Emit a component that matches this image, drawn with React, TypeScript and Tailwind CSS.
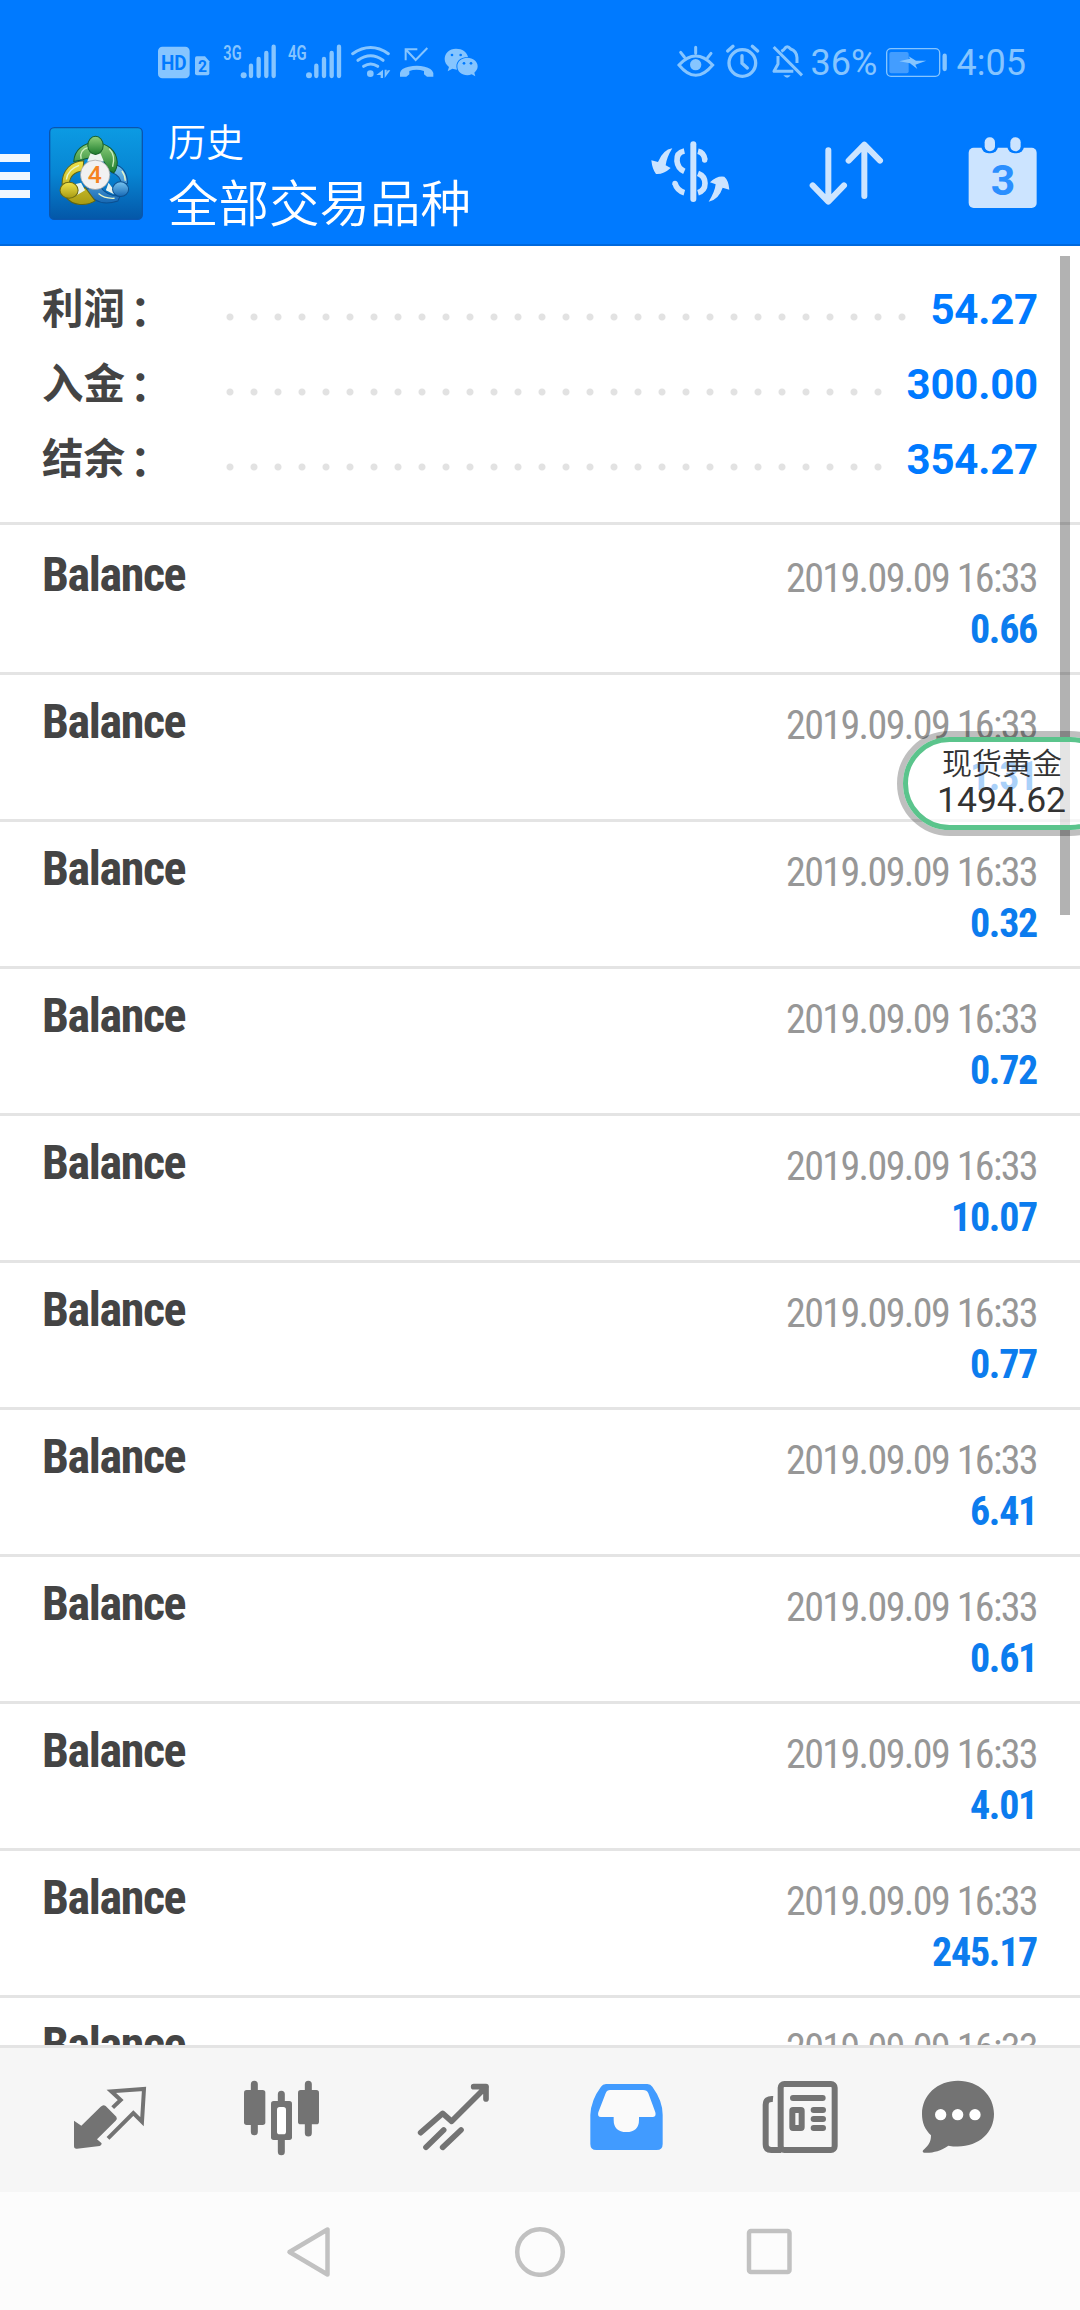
import React from 'react';

const summary = [
  { label: '利润', value: '54.27' },
  { label: '入金', value: '300.00' },
  { label: '结余', value: '354.27' },
];

const amounts = ['0.66', '1.31', '0.32', '0.72', '10.07', '0.77', '6.41', '0.61', '4.01', '245.17', ''];

function StatusBar() {
  return (
    <div className="flex h-24 items-start justify-between pt-10 pl-[156.67px] pr-[54px] text-[#86c5ff]">
      <div className="flex">
        <svg viewBox="50 30 106 120" className="h-10 w-[35.33px]" fill="currentColor">
          <rect x="53" y="50" width="95" height="95" rx="13" />
          <text x="62" y="119" fontSize="58" fontWeight="700" textLength="77" lengthAdjust="spacingAndGlyphs" fill="#007aff" className="font-['Roboto',sans-serif]">HD</text>
        </svg>
        <svg viewBox="156 30 84 120" className="h-10 w-7" fill="currentColor">
          <path d="M170 79h25l13 15v36q0 6-6 6h-31q-6 0-6-6V85q0-6 5-6z" />
          <text x="174" y="127" fontSize="47" fontWeight="700" fill="#007aff" className="font-['Roboto',sans-serif]">2</text>
        </svg>
        <svg viewBox="240 30 185 120" className="h-10 w-[61.67px]" fill="currentColor">
          <text x="250" y="90" fontSize="59" fontWeight="600" textLength="55" lengthAdjust="spacingAndGlyphs" className="font-['Roboto',sans-serif]">3G</text>
          <circle cx="311" cy="136" r="9" />
          <path d="M333 107v31M356 87v51M379 69v69M401 50v88" stroke="currentColor" strokeWidth="13" strokeLinecap="round" />
        </svg>
        <svg viewBox="425 30 195 120" className="h-10 w-[65px]" fill="currentColor">
          <text x="443" y="90" fontSize="59" fontWeight="600" textLength="56" lengthAdjust="spacingAndGlyphs" className="font-['Roboto',sans-serif]">4G</text>
          <circle cx="506" cy="136" r="9" />
          <path d="M528 107v31M551 87v51M574 69v69M596 50v88" stroke="currentColor" strokeWidth="13" strokeLinecap="round" />
        </svg>
        <svg viewBox="620 30 145 120" className="h-10 w-[48.33px]" fill="none" stroke="currentColor" strokeWidth="9" strokeLinecap="round">
          <path d="M637 71q54-37 107 0M653 91q38-27 75 0M670 109q21-14 42 0" />
          <circle cx="690" cy="131" r="10" fill="currentColor" stroke="none" />
          <path d="M728 119v25h-7v-9h-13zM733 119v25l17-23h-8l-3 7v-9z" fill="currentColor" stroke="none" />
        </svg>
        <svg viewBox="765 30 130 120" className="h-10 w-[43.33px]" fill="none" stroke="currentColor" strokeWidth="6">
          <path d="M797 91V58h35M799 60l28 30 35-36" />
          <path d="M780 140v-11q3-15 26-19 25-5 48 0 21 4 26 19v11h-19l-9-7v-10q-23-7-44 0v10l-9 7z" fill="currentColor" stroke="none" />
        </svg>
        <svg viewBox="895 30 125 120" className="h-10 w-[41.67px]" fill="currentColor">
          <path d="M949 56c-20 0-34 14-34 31 0 10 5 18 13 24l-4 13 14-8 14 3c-7-22 8-38 33-38-3-15-17-25-36-25z" />
          <path d="M983 83c17 0 31 11 31 26 0 8-4 14-10 19l3 11-11-6q-6 3-13 3c-17 0-30-11-30-27 0-15 13-26 30-26z" />
          <g fill="#007aff">
            <circle cx="937" cy="75" r="4" />
            <circle cx="963" cy="75" r="4" />
            <circle cx="973" cy="100" r="4" />
            <circle cx="994" cy="100" r="4" />
          </g>
        </svg>
      </div>
      <div className="flex font-['Roboto',sans-serif]">
        <svg viewBox="45 30 135 120" className="h-10 w-[45px]" fill="none" stroke="currentColor" strokeWidth="9" strokeLinecap="round">
          <path d="M57 105q50-54 101 0-51 62-101 0zM107 52v18M62 67l11 14M153 70l-10 13" />
          <circle cx="107" cy="104" r="17" fill="currentColor" stroke="none" />
        </svg>
        <svg viewBox="180 30 138 120" className="h-10 w-[46px]" fill="none" stroke="currentColor" strokeWidth="10" strokeLinecap="round">
          <circle cx="247" cy="99" r="40" />
          <path d="M246 77v23l16 14M203 63l16-14M293 63l-16-14" />
        </svg>
        <svg viewBox="318 30 122 120" className="h-10 w-[40.67px]" fill="none" stroke="currentColor" strokeWidth="9" strokeLinejoin="round">
          <path d="M341 51l85 85M354 78v24l-12 22h58M364 64q8-4 9-7 8-14 19 0 18 6 19 26v16" />
          <path d="M370 136h22q-10 14-22 0z" fill="currentColor" stroke="none" />
        </svg>
        <span className="w-[76px] pl-1 text-[36px] leading-[47px]">36%</span>
        <svg viewBox="668 30 207 120" className="h-10 w-[69px]" fill="none">
          <rect x="679" y="56" width="159" height="83" rx="13" stroke="currentColor" strokeWidth="4" />
          <rect x="687" y="66" width="58" height="64" rx="6" fill="#439dff" />
          <path d="M717 94l32-8-4-7 22 13h31l-33 12 6 13-22-17z" fill="currentColor" />
          <path d="M853 77v40" stroke="currentColor" strokeWidth="13" strokeLinecap="round" />
        </svg>
        <span className="ml-[5px] text-[36px] leading-[47px]">4:05</span>
      </div>
    </div>
  );
}

function AppLogo() {
  return (
    <svg viewBox="148 53 281 278" className="h-[93px] w-[94px]">
      <defs>
        <linearGradient id="tile" x1="0" y1="0" x2="0" y2="1">
          <stop offset="0" stopColor="#0c9be3" />
          <stop offset="0.5" stopColor="#0785d3" />
          <stop offset="1" stopColor="#0457a8" />
        </linearGradient>
        <linearGradient id="green" x1="0" y1="0" x2="0" y2="1">
          <stop offset="0" stopColor="#8ed07c" />
          <stop offset="1" stopColor="#1d7c2c" />
        </linearGradient>
        <linearGradient id="yellow" x1="0" y1="0" x2="0" y2="1">
          <stop offset="0" stopColor="#f1e34a" />
          <stop offset="1" stopColor="#a79a12" />
        </linearGradient>
        <linearGradient id="blue" x1="0" y1="0" x2="0" y2="1">
          <stop offset="0" stopColor="#77c4f0" />
          <stop offset="1" stopColor="#1668b4" />
        </linearGradient>
      </defs>
      <rect x="150" y="55" width="277" height="274" rx="14" fill="url(#tile)" stroke="#0a55ad" strokeWidth="4" />
      <path d="M345 165q36 10 38 56l-18 8q-2-32-30-40zM256 240q34 56 98 34l6-14q-40 0-60-30z" fill="url(#blue)" stroke="#0b4f91" strokeWidth="3" />
      <path d="M252 154c-38 0-66 30-65 70l22-2q2-32 40-38zM198 262c20 28 62 28 88 12l-30-40-30 20z" fill="url(#yellow)" stroke="#5d6416" strokeWidth="3" />
      <path d="M222 156c2-34 28-56 64-56s64 24 66 58q0 18-10 32l-22-10q0-30-32-36-26 0-42 8z" fill="url(#green)" stroke="#155c2a" strokeWidth="3" />
      <path d="M244 148q-6-26 22-34M328 118q20 20 10 54" fill="none" stroke="#cdeebd" strokeWidth="4" />
      <path d="M200 210q4-30 38-42M296 252q18 16 48 14M366 184q10 14 10 30" fill="none" stroke="#e8f6c8" strokeWidth="4" />
      <path d="M272 132h30l10 24h-50zM218 226l26-6 12 22-24 14zM340 238l-14-18-8 22 24 12z" fill="#e9f4ef" />
      <ellipse cx="287" cy="108" rx="23" ry="27" fill="url(#green)" stroke="#17602a" strokeWidth="3" />
      <ellipse cx="208" cy="242" rx="27" ry="24" fill="url(#yellow)" stroke="#6b6a14" strokeWidth="3" />
      <ellipse cx="362" cy="239" rx="24" ry="22" fill="url(#blue)" stroke="#0d508f" strokeWidth="3" />
      <circle cx="286" cy="196" r="44" fill="#f1f1f1" stroke="#9a9a9a" strokeWidth="2" />
      <text x="285" y="221" textAnchor="middle" fontSize="74" fontWeight="500" fill="#f58220" className="font-['Roboto',sans-serif]">4</text>
    </svg>
  );
}

function Header() {
  return (
    <div className="flex h-[150px] items-start border-b-2 border-[#0069dd] text-white">
      <div className="mt-[58px] flex w-[30px] flex-col gap-2.5">
        <div className="h-2 bg-[#f0f7ff]" />
        <div className="h-2 bg-[#f0f7ff]" />
        <div className="h-2 bg-[#f0f7ff]" />
      </div>
      <div className="mt-[31px] ml-[19px]">
        <AppLogo />
      </div>
      <div className="mt-[17px] ml-[25px] w-[479px] font-['Noto_Sans_CJK_SC',sans-serif] font-[350]">
        <div className="text-[38px] leading-[53px]">历史</div>
        <div className="text-[50.5px] leading-[68px]">全部交易品种</div>
      </div>
      <svg viewBox="80 40 260 250" className="mt-[27px] h-[83.33px] w-[86.67px]" fill="none" stroke="#cce4ff" strokeWidth="17">
        <path d="M219 104v164" strokeWidth="18" strokeLinecap="round" />
        <path d="M192 124q-24 5-22 30 2 22 22 31M192 249q-22-6-28-28" />
        <path d="M233 125q18 4 21 26M233 191q21 8 21 30 0 22-21 28" />
        <circle cx="253" cy="151" r="8" fill="#cce4ff" stroke="none" />
        <circle cx="164" cy="221" r="8" fill="#cce4ff" stroke="none" />
        <path d="M156 116q-28 4-43 41l-20-5q3 28 14 41 22 2 44-18l-15-8q3-24 20-51zM265 276q30-6 42-42l20 6q-2-28-15-39-22-4-43 17l17 6q-2 22-21 52z" fill="#cce4ff" stroke="none" />
      </svg>
      <svg viewBox="560 40 240 250" className="mt-[27px] ml-[73.33px] h-[83.33px] w-20" fill="none" stroke="#cce4ff" strokeWidth="18" strokeLinecap="round" strokeLinejoin="round">
        <path d="M624 122v153M577 227l47 49 47-49M732 259V105M685 153l47-48 47 48" />
      </svg>
      <svg viewBox="1030 40 230 270" className="mt-[27px] ml-[76.67px] h-[90px] w-[76.67px]">
        <rect x="1044" y="114" width="204" height="181" rx="15" fill="#cce4ff" />
        <rect x="1082" y="74" width="50" height="57" rx="22" fill="#007aff" />
        <rect x="1160" y="74" width="50" height="57" rx="22" fill="#007aff" />
        <rect x="1092" y="83" width="31" height="42" rx="15" fill="#cce4ff" />
        <rect x="1169" y="83" width="31" height="42" rx="15" fill="#cce4ff" />
        <text x="1147" y="256" textAnchor="middle" fontSize="128" fontWeight="700" fill="#2b8fff" className="font-['Roboto',sans-serif]">3</text>
      </svg>
    </div>
  );
}

function Summary() {
  return (
    <div className="h-[279px] border-b-[3px] border-[#e4e4e4] px-[42px] pt-[26px]">
      {summary.map((item) => (
        <div key={item.label} className="flex h-[75px] items-center">
          <span className="-mt-1 flex w-[176px] gap-[5px] font-['Noto_Sans_CJK_SC',sans-serif] text-[41.5px] leading-[75px] font-bold text-[#444]">
            {item.label}
            <span className="pt-0.5">：</span>
          </span>
          <div className="mt-[15px] mr-[17px] h-6 flex-1 bg-[radial-gradient(circle,#e2e2e2_3px,transparent_4px)] bg-size-[24px_24px]" />
          <span className="font-['Roboto',sans-serif] text-[42px] leading-[75px] font-bold tracking-[-0.2px] text-[#007aff]">{item.value}</span>
        </div>
      ))}
    </div>
  );
}

function BalanceRow({ amount }: { amount: string }) {
  return (
    <div className="flex h-[147px] shrink-0 justify-between border-t-[3px] border-[#e4e4e4] pt-[25px] pr-[43px] pl-[42px] font-['Roboto_Condensed','Roboto',sans-serif] font-stretch-condensed first:border-transparent">
      <div className="text-[48px] leading-[44px] font-bold tracking-[-1.4px] text-[#444]">Balance</div>
      <div className="text-right text-[40px]">
        <div className="leading-[51px] tracking-[-1.6px] text-[#979797]">2019.09.09 16:33</div>
        <div className="leading-[52px] font-bold tracking-[-1.3px] text-[#0c7cee]">{amount}</div>
      </div>
    </div>
  );
}

function PriceBubble() {
  return (
    <div className="absolute top-[731px] left-[897px] h-[105px] w-[226px] rounded-full border-[6px] border-black/25">
      <div className="h-full rounded-full border-[5px] border-[#5bc48c] bg-white/65 pt-1 text-[#333]">
        <div className="pl-[34px] font-['Noto_Sans_CJK_SC',sans-serif] text-[30px] leading-[30px] font-[350]">现货黄金</div>
        <div className="pl-[29px] font-['Roboto',sans-serif] text-[35.5px] leading-[48px]">1494.62</div>
      </div>
    </div>
  );
}

function TabBar() {
  return (
    <div className="grid h-[147px] grid-cols-6 border-t-[3px] border-[#e4e4e4] bg-[#f6f6f6] text-[#737373]">
      <svg viewBox="0 144 540 432" className="h-36 w-[180px]" fill="currentColor">
        <path d="M222 362l22 15 58-57q8-8 15-2l32 32q4 6-2 12l-56 56 14 12q0 7-6 8l-68 8q-9 1-9-8z" />
        <path d="M338 323l24-23-28-26 98-7-6 98-26-26-76 76" fill="none" stroke="currentColor" strokeWidth="12" />
      </svg>
      <svg viewBox="540 144 540 432" className="h-36 w-[180px]" fill="currentColor">
        <path d="M763 253v142M925 253v146M844 283v30M844 410v45" stroke="currentColor" strokeWidth="21" strokeLinecap="round" />
        <rect x="732" y="270" width="64" height="105" rx="8" />
        <rect x="894" y="270" width="63" height="103" rx="8" />
        <rect x="813" y="303" width="63" height="117" rx="8" />
        <rect x="831" y="321" width="27" height="82" rx="8" fill="#fff" />
      </svg>
      <svg viewBox="0 54 540 432" className="h-36 w-[180px]" fill="none" stroke="currentColor" strokeWidth="17" strokeLinecap="round">
        <path d="M182 308l66-58 27 24L378 171M341 170h37v37" strokeLinejoin="round" />
        <path d="M198 352l53-52M248 352l55-52" />
      </svg>
      <svg viewBox="540 54 540 432" className="h-36 w-[180px]">
        <path d="M738 162h124q10 0 15 8 31 42 31 84v88q0 18-18 18H709q-18 0-18-18v-88q2-44 32-84 5-8 15-8z" fill="#419bff" />
        <path d="M750 180h99q12 0 16 10l21 57q4 14-9 14h-40v8q0 37-38 37t-38-37v-8h-38q-12 0-8-14l22-57q4-10 13-10z" fill="#fafafa" />
      </svg>
      <svg viewBox="0 144 540 432" className="h-36 w-[180px]" fill="none" stroke="currentColor" strokeWidth="18">
        <rect x="182" y="252" width="162" height="198" rx="11" />
        <path d="M159 297q-22-2-22 18v118q0 17 17 17h30" />
        <path d="M219 294h89M281 330h28M281 357h28M281 384h28" strokeLinecap="round" />
        <rect x="217" y="330" width="28" height="54" rx="2" />
      </svg>
      <svg viewBox="540 144 540 432" className="h-36 w-[180px]" fill="currentColor">
        <path d="M714 242c62 0 108 43 108 100 0 62-57 109-137 95-24 16-46 22-70 21-7 0-9-5-4-9 18-14 22-28 22-43-18-17-27-37-27-64 0-57 46-100 108-100z" />
        <g fill="#fff">
          <circle cx="662" cy="344" r="17" />
          <circle cx="713" cy="344" r="17" />
          <circle cx="765" cy="344" r="17" />
        </g>
      </svg>
    </div>
  );
}

function NavigationBar() {
  return (
    <div className="flex h-[118px] items-start bg-[#fcfcfc] pt-[33px] pl-[286px]">
      <svg viewBox="0 0 46 52" className="h-[52px] w-[46px]" fill="none" stroke="#c1c1c1" strokeWidth="4.5" strokeLinejoin="round">
        <path d="M41.5 4.5v45L3.5 27z" />
      </svg>
      <svg viewBox="0 0 52 52" className="ml-[182px] h-[52px] w-[52px]" fill="none" stroke="#c1c1c1" strokeWidth="4.5">
        <circle cx="26" cy="27" r="22.8" />
      </svg>
      <svg viewBox="0 0 46 52" className="ml-[180px] h-[52px] w-[46px]" fill="none" stroke="#c1c1c1" strokeWidth="4.5">
        <rect x="3" y="6" width="40.5" height="41" rx="2" />
      </svg>
    </div>
  );
}

export default function App() {
  return (
    <div className="relative flex h-[2310px] w-[1080px] flex-col overflow-hidden bg-white">
      <div className="bg-[#007aff]">
        <StatusBar />
        <Header />
      </div>
      <Summary />
      <div className="flex h-[1520px] flex-col overflow-hidden">
        {amounts.map((amount, index) => (
          <BalanceRow key={index} amount={amount} />
        ))}
      </div>
      <TabBar />
      <NavigationBar />
      <div className="absolute top-64 left-[1060px] h-[659px] w-2.5 bg-black/30" />
      <PriceBubble />
    </div>
  );
}
